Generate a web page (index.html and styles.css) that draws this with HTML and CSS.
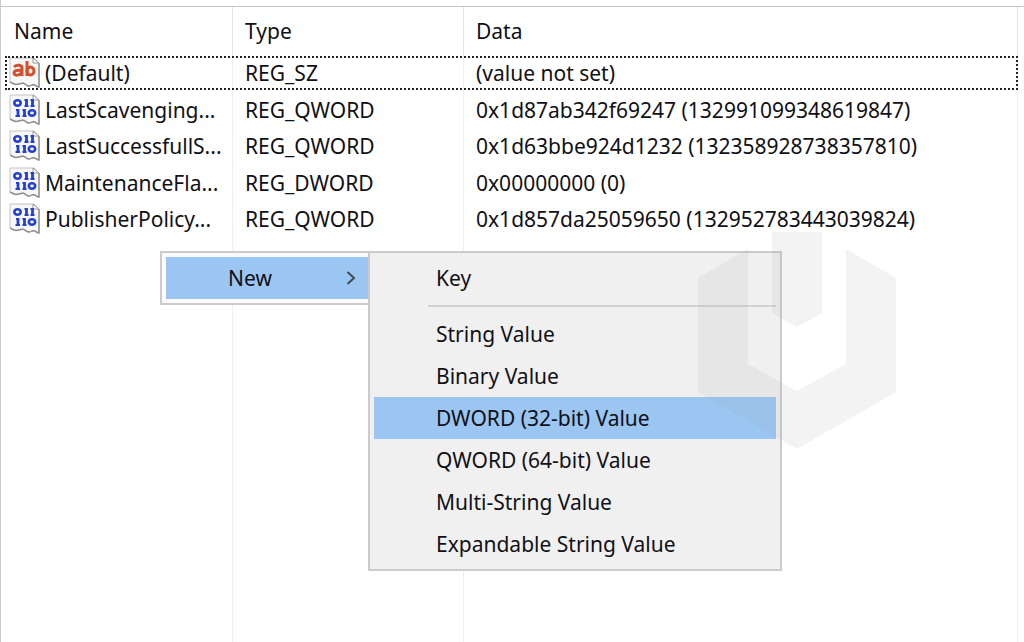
FILE: index.html
```html
<!DOCTYPE html>
<html lang="en">
<head>
<meta charset="utf-8">
<title>Registry values</title>
<link rel="stylesheet" href="styles.css">
</head>
<body>
<svg class="defs" aria-hidden="true">
  <symbol id="sheet" viewBox="0 0 32 32">
    <path d="M1 1H25L30 6V30C27 30 27 27 23 28C20 30 18 29 16 27C13 24 9 29 5 27L1 25Z" fill="#f7f7f8" stroke="#c4c4c6"/>
    <path d="M30 6V30C27 30 27 27 23 28C20 30 18 29 16 27C13 24 9 29 5 27L1 25" fill="none" stroke="#909090" stroke-width="1.5"/>
    <path d="M24 1V6H30Z" fill="#fff" stroke="#999"/>
  </symbol>
  <symbol id="binary" viewBox="0 0 32 32">
    <use href="#sheet"/>
    <g fill="none" stroke="#2340d0" stroke-width="2.6">
      <ellipse cx="8.500" cy="9" rx="3.2" ry="2.700"/>
      <path d="M17.500 5V12M23.500 5V12M9 15V22M15.500 15V22" stroke-width="2.800"/>
      <path d="M15.500 6H17M21.500 6H23M15.500 12H19.500M21.500 12H25.500M7 16H8.500M13.500 16H15M6.500 22H11M13.500 22H17.500" stroke-width="1.800"/>
      <ellipse cx="23" cy="19" rx="3.2" ry="2.700"/>
    </g>
  </symbol>
  <symbol id="string" viewBox="0 0 32 32">
    <use href="#sheet"/>
    <g fill="none" stroke="#d4512d" stroke-width="3">
      <path d="M5 10C8 7 13 8 13 11V19M13 13C9 13 5 13 5 16C5 19 11 19 13 15"/>
      <path d="M18 4V19"/><ellipse cx="21.500" cy="14" rx="3.500" ry="4"/>
    </g>
  </symbol>
</svg>
<main class="registry">
  <table class="values">
    <colgroup><col class="col-name"><col class="col-type"><col></colgroup>
    <thead>
      <tr><th>Name</th><th>Type</th><th>Data</th></tr>
    </thead>
    <tbody>
      <tr class="focused"><td><span class="name"><svg class="icon"><use href="#string"/></svg>(Default)</span></td><td>REG_SZ</td><td>(value not set)</td></tr>
      <tr><td><span class="name"><svg class="icon"><use href="#binary"/></svg>LastScavenging...</span></td><td>REG_QWORD</td><td>0x1d87ab342f69247 (132991099348619847)</td></tr>
      <tr><td><span class="name"><svg class="icon"><use href="#binary"/></svg>LastSuccessfullS...</span></td><td>REG_QWORD</td><td>0x1d63bbe924d1232 (132358928738357810)</td></tr>
      <tr><td><span class="name"><svg class="icon"><use href="#binary"/></svg>MaintenanceFla...</span></td><td>REG_DWORD</td><td>0x00000000 (0)</td></tr>
      <tr><td><span class="name"><svg class="icon"><use href="#binary"/></svg>PublisherPolicy...</span></td><td>REG_QWORD</td><td>0x1d857da25059650 (132952783443039824)</td></tr>
      <tr class="filler"><td></td><td></td><td></td></tr>
    </tbody>
  </table>
  <div class="context">
    <div class="menu parent" role="menu">
      <button class="item open" role="menuitem" aria-haspopup="true">New
        <svg class="chevron" viewBox="0 0 10 14"><path d="M1.500 1L8 7L1.500 13" fill="none" stroke="#3f4a55" stroke-width="2"/></svg>
      </button>
    </div>
    <div class="menu submenu" role="menu">
      <button class="item" role="menuitem">Key</button>
      <hr class="separator">
      <button class="item" role="menuitem">String Value</button>
      <button class="item" role="menuitem">Binary Value</button>
      <button class="item selected" role="menuitem">DWORD (32-bit) Value</button>
      <button class="item" role="menuitem">QWORD (64-bit) Value</button>
      <button class="item" role="menuitem">Multi-String Value</button>
      <button class="item" role="menuitem">Expandable String Value</button>
    </div>
  </div>
  <svg class="watermark" viewBox="0 0 200 218" aria-hidden="true">
    <path d="M75 0H125V81L100 95L75 81ZM1 46L51 17V132L100 159L149 132V17L199 46V160L100 217L1 160Z"/>
  </svg>
</main>
</body>
</html>
```
FILE: styles.css
```css
* { box-sizing: border-box; }
body {
  margin: 0;
  background: #fff;
  color: #101016;
  font: 21px/28px "Noto Sans", "Open Sans", sans-serif;
}
.defs { position: absolute; width: 0; height: 0; }
.registry {
  position: relative;
  display: flex;
  min-height: 100vh;
  padding-top: 6px;
  border-left: 1px solid #c9cdd3;
}
.registry::before {
  content: "";
  position: absolute;
  top: 6px;
  left: 0;
  right: 0;
  border-top: 1px solid #c4c6c9;
}
.values {
  flex: 1;
  margin: 1px 6px 0 0;
  table-layout: fixed;
  border-collapse: separate;
  border-spacing: 0;
}
.col-name { width: 232px; }
.col-type { width: 231px; }
th, td {
  padding: 0 0 0 12px;
  border-right: 1px solid #e6f1fa;
  text-align: left;
  font-weight: 400;
  white-space: nowrap;
}
th { height: 48px; border-color: #e2e4e7; }
th:first-child { padding-left: 13px; }
tbody tr { height: 36px; }
tbody tr:nth-child(even) { height: 37px; }
tbody tr.filler:last-child { height: auto; }
tbody td:first-child { padding-left: 8px; }
.name { display: flex; align-items: center; gap: 4px; }
.icon { width: 32px; height: 32px; flex: none; }
.focused { position: relative; }
.focused td:last-child::after {
  content: "";
  position: absolute;
  inset: 1px 0 1px 4px;
  border: 2px dotted #222;
}
.context {
  position: absolute;
  top: 251px;
  left: 159px;
  display: flex;
  align-items: flex-start;
}
.menu { border: 2px solid #cbcbcb; background: #f0f0f0; }
.parent { width: 208px; padding: 4px 0 4px 4px; border-right: 0; background: #fafafa; }
.submenu { width: 414px; padding: 4px; }
.item {
  display: flex;
  align-items: center;
  justify-content: space-between;
  width: 100%;
  height: 42px;
  padding: 0 12px 0 62px;
  border: 0;
  background: none;
  color: inherit;
  font: inherit;
  text-align: left;
}
.open, .selected { background: #9bc6f2; }
.chevron { width: 10px; height: 14px; }
.separator { height: 2px; margin: 6px 0 6px 54px; border: 0; background: #d2d2d2; }
.watermark {
  position: absolute;
  top: 232px;
  left: 696px;
  width: 200px;
  height: 218px;
  fill: #a0a0a0;
  opacity: 0.115;
  pointer-events: none;
}
```
